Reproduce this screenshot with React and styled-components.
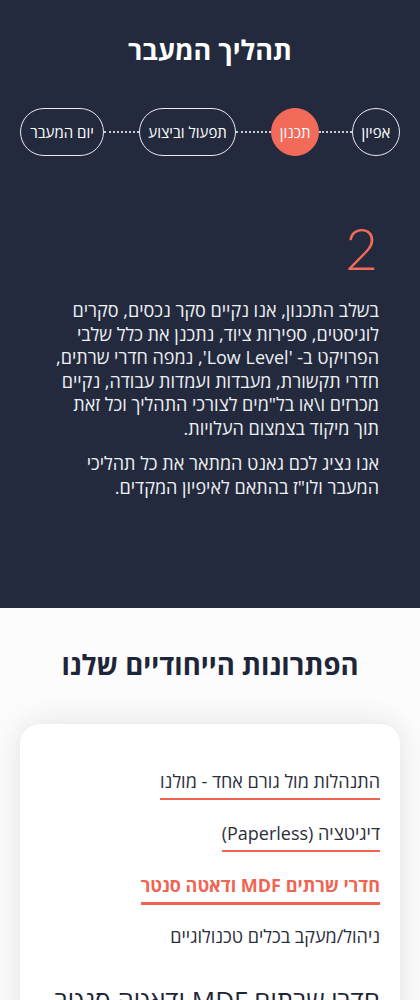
import styled, { createGlobalStyle } from "styled-components";

const GlobalStyle = createGlobalStyle`
  body {
    margin: 0;
    font-family: "Open Sans", "DejaVu Sans", sans-serif;
    background: #fcfcfc;
  }
`;

const Page = styled.div`
  direction: rtl;
  width: 420px;
`;

const DarkSection = styled.section`
  background: #232a3d;
  height: 608px;
  padding-top: 31px;
  box-sizing: border-box;
  color: #fff;
`;

const Title = styled.h2`
  margin: 0;
  text-align: center;
  font-size: ${(p) => (p.$dark ? "27.5px" : "27px")};
  font-weight: 700;
  line-height: 38px;
  color: ${(p) => (p.$dark ? "#1e2538" : "#fff")};
`;

const Steps = styled.div`
  display: flex;
  align-items: center;
  justify-content: center;
  margin-top: 39px;
  padding: 0 20px;
`;

const Step = styled.div`
  height: 48px;
  min-width: 48px;
  box-sizing: border-box;
  padding: 0 ${(p) => (p.$round ? "0" : "12px")};
  border-radius: 24px;
  border: 1px solid ${(p) => (p.$active ? "#f26a59" : "#e9e9ee")};
  background: ${(p) => (p.$active ? "#f26a59" : "transparent")};
  display: flex;
  align-items: center;
  justify-content: center;
  font-size: 15px;
  white-space: nowrap;
  color: #fff;
`;

const Dots = styled.div`
  width: ${(p) => p.$w}px;
  border-top: 2px dotted #c9ccd4;
  height: 0;
`;

const Content = styled.div`
  padding: 0 41px 0 54px;
  margin-top: 62px;
`;

const Number = styled.div`
  font-size: 57px;
  font-weight: 300;
  line-height: 60px;
  color: #f26a59;
  font-family: "Lato", "Open Sans", sans-serif;
  margin-right: 1px;
`;

const Para = styled.p`
  margin: 21px 0 0;
  font-size: 18px;
  line-height: 23.5px;
  color: #eef0f4;
  & + & {
    margin-top: 12px;
  }
`;

const LightSection = styled.section`
  background: #fcfcfc;
  padding-top: 38px;
`;

const Card = styled.div`
  margin: 40px 20px 0;
  background: #fff;
  border-radius: 20px;
  box-shadow: 0 0 30px rgba(30, 37, 56, 0.12);
  padding: 45px 20px 40px;
  display: flex;
  flex-direction: column;
  align-items: flex-start;
`;

const Item = styled.div`
  font-size: 18px;
  line-height: 24px;
  color: ${(p) => (p.$active ? "#ef6554" : "#2a2f3b")};
  font-weight: ${(p) => (p.$active ? 700 : 400)};
  padding-bottom: ${(p) => (p.$line ? "5px" : "0")};
  border-bottom: ${(p) => (p.$active ? "3px" : p.$line ? "2px" : "0")} solid #ef6554;
  margin-bottom: ${(p) => (p.$active ? "19px" : "21px")};
`;

const CardHeading = styled.h3`
  margin: 13px 0 0;
  font-size: 26px;
  font-weight: 400;
  line-height: 36px;
  color: #1e2538;
`;

const items = [
  { label: "התנהלות מול גורם אחד - מולנו", line: true },
  { label: "דיגיטציה (Paperless)", line: true },
  { label: "חדרי שרתים MDF ודאטה סנטר", line: true, active: true },
  { label: "ניהול/מעקב בכלים טכנולוגיים" },
];

export default function App() {
  return (
    <Page>
      <GlobalStyle />
      <DarkSection>
        <Title>תהליך המעבר</Title>
        <Steps>
          <Step $round>אפיון</Step>
          <Dots $w={36} />
          <Step $round $active>תכנון</Step>
          <Dots $w={38} />
          <Step>תפעול וביצוע</Step>
          <Dots $w={38} />
          <Step>יום המעבר</Step>
        </Steps>
        <Content>
          <Number>2</Number>
          <Para>
            בשלב התכנון, אנו נקיים סקר נכסים, סקרים לוגיסטים, ספירות ציוד, נתכנן את כלל שלבי
            הפרויקט ב- 'Low Level', נמפה חדרי שרתים, חדרי תקשורת, מעבדות ועמדות עבודה, נקיים
            מכרזים ו\או בל"מים לצורכי התהליך וכל זאת תוך מיקוד בצמצום העלויות.
          </Para>
          <Para>
            אנו נציג לכם גאנט המתאר את כל תהליכי המעבר ולו"ז בהתאם לאיפיון המקדים.
          </Para>
        </Content>
      </DarkSection>
      <LightSection>
        <Title $dark>הפתרונות הייחודיים שלנו</Title>
        <Card>
          {items.map((it) => (
            <Item key={it.label} $line={it.line} $active={it.active}>
              {it.label}
            </Item>
          ))}
          <CardHeading>חדרי שרתים MDF ודאטה סנטר</CardHeading>
        </Card>
      </LightSection>
    </Page>
  );
}
